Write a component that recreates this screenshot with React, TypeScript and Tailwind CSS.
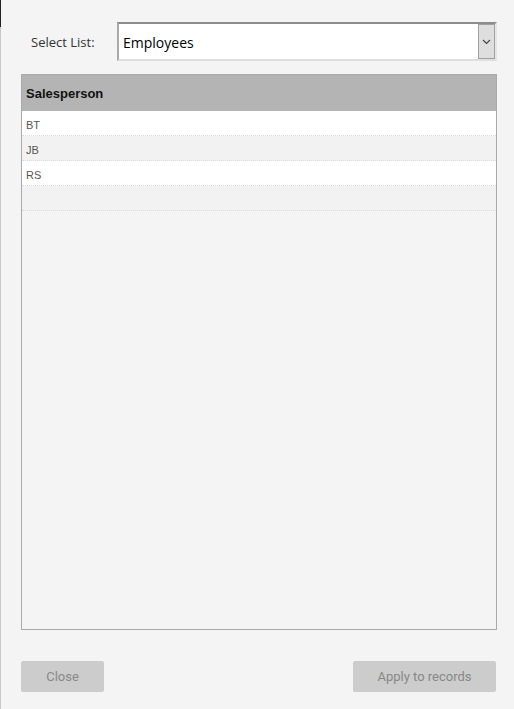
export default function App() {
  const rows = ["BT", "JB", "RS", ""];

  return (
    <div
      className="relative h-[709px] w-[514px] bg-[#f4f4f4] text-[#333]"
      style={{ fontFamily: '"Open Sans", "Liberation Sans", sans-serif' }}
    >
      {/* window edge */}
      <div className="absolute left-0 top-0 h-[27px] w-px bg-[#222]" />
      <div className="absolute left-0 top-[27px] bottom-0 w-px bg-[#c8c8c8]" />

      <div className="flex flex-col pl-[21px] pr-[17px] pt-[22px]">
        {/* select row */}
        <div className="flex h-[39px] items-center">
          <label className="w-[96px] pl-[10px] pt-[2px] text-[13px] text-[#333]">Select List:</label>
          <div className="flex h-[39px] flex-1 border-t-2 border-l-2 border-t-[#8c8c8c] border-l-[#a8a8a8] border-b-2 border-r-2 border-b-[#dedede] border-r-[#e6e6e6] bg-white">
            <span className="flex flex-1 items-center pl-[4px] pt-[1px] text-[14px] text-black">Employees</span>
            <div className="flex w-[17px] items-center justify-center border border-[#a0a0a0] bg-[#dedede]">
              <svg width="9" height="6" viewBox="0 0 9 6">
                <path d="M1 1 L4.5 4.5 L8 1" fill="none" stroke="#444" strokeWidth="1.2" />
              </svg>
            </div>
          </div>
        </div>

        {/* table */}
        <div
          className="mt-[13px] flex h-[556px] flex-col border border-[#aaaaaa] bg-[#f4f4f4]"
          style={{ fontFamily: '"Liberation Sans", Arial, sans-serif' }}
        >
          <div className="flex h-[36px] items-center bg-[#b4b4b4] pl-[4px] pt-[2px] text-[13px] font-bold text-[#111]">
            Salesperson
          </div>
          {rows.map((r, i) => (
            <div
              key={i}
              className={`flex h-[25px] items-center border-b border-dotted border-[#dcdcdc] pl-[4px] pt-[4px] text-[11px] text-[#555] ${
                i % 2 === 0 ? "bg-white" : "bg-[#f2f2f2]"
              }`}
            >
              {r}
            </div>
          ))}
        </div>

        {/* buttons */}
        <div
          className="mt-[31px] flex justify-between pr-px"
          style={{ fontFamily: 'Roboto, "Liberation Sans", sans-serif' }}
        >
          <button className="h-[31px] w-[83px] rounded-[2px] bg-[#cccccc] text-[13px] text-[#888]">
            Close
          </button>
          <button className="h-[31px] w-[143px] rounded-[2px] bg-[#cccccc] text-[13px] text-[#888]">
            Apply to records
          </button>
        </div>
      </div>
    </div>
  );
}
